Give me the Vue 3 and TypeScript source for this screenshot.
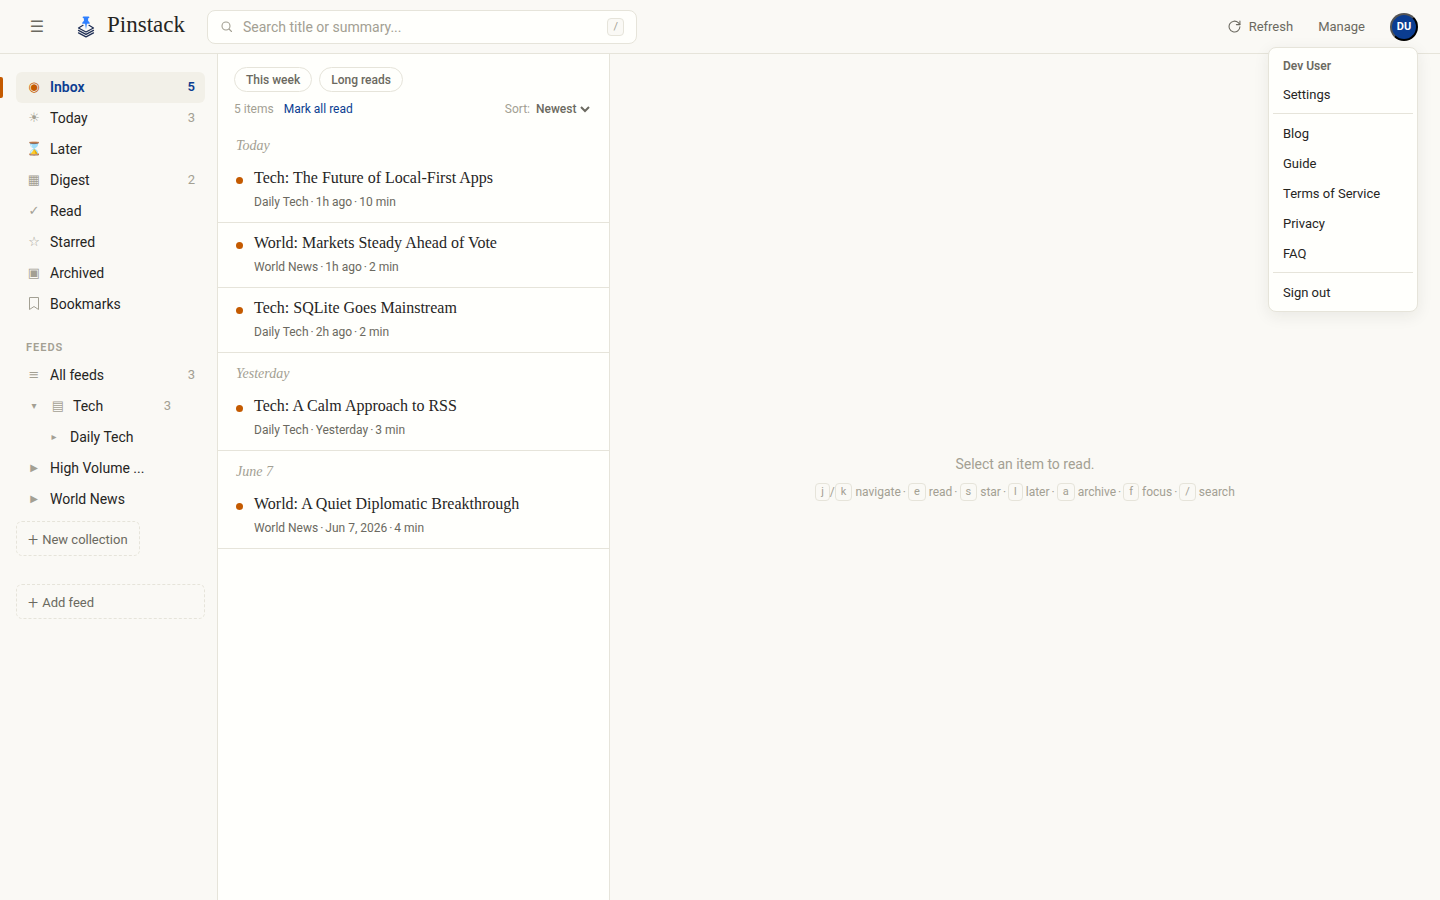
<script setup lang="ts">
import { ref } from 'vue'

interface NavItem {
  label: string
  icon: string
  count?: number
}
interface Article {
  title: string
  meta: string[]
}
interface Group {
  label: string
  items: Article[]
}

const query = ref('')
const sort = ref('Newest')
const active = ref('Inbox')

const views: NavItem[] = [
  { label: 'Inbox', icon: '◉', count: 5 },
  { label: 'Today', icon: '☀', count: 3 },
  { label: 'Later', icon: '⌛' },
  { label: 'Digest', icon: '▦', count: 2 },
  { label: 'Read', icon: '✓' },
  { label: 'Starred', icon: '☆' },
  { label: 'Archived', icon: '▣' },
  { label: 'Bookmarks', icon: 'bookmark' },
]

const groups: Group[] = [
  {
    label: 'Today',
    items: [
      { title: 'Tech: The Future of Local-First Apps', meta: ['Daily Tech', '1h ago', '10 min'] },
      { title: 'World: Markets Steady Ahead of Vote', meta: ['World News', '1h ago', '2 min'] },
      { title: 'Tech: SQLite Goes Mainstream', meta: ['Daily Tech', '2h ago', '2 min'] },
    ],
  },
  {
    label: 'Yesterday',
    items: [{ title: 'Tech: A Calm Approach to RSS', meta: ['Daily Tech', 'Yesterday', '3 min'] }],
  },
  {
    label: 'June 7',
    items: [{ title: 'World: A Quiet Diplomatic Breakthrough', meta: ['World News', 'Jun 7, 2026', '4 min'] }],
  },
]

const shortcuts = [
  { keys: ['j', 'k'], action: 'navigate' },
  { keys: ['e'], action: 'read' },
  { keys: ['s'], action: 'star' },
  { keys: ['l'], action: 'later' },
  { keys: ['a'], action: 'archive' },
  { keys: ['f'], action: 'focus' },
  { keys: ['/'], action: 'search' },
]

const infoLinks = ['Blog', 'Guide', 'Terms of Service', 'Privacy', 'FAQ']
</script>

<template>
  <div class="app">
    <header class="topbar">
      <button class="burger" type="button" aria-label="Toggle sidebar">☰</button>
      <a class="brand" href="#">
        <svg class="logo" viewBox="0 0 20 24" width="20" height="24" aria-hidden="true">
          <g fill="none" stroke="#1f2f55" stroke-width="1.2" stroke-linejoin="round" stroke-linecap="round">
            <path d="M7 10.300 2.500 13 10 17l7.500-4L13 10.300" />
            <path d="M2.500 15.400 10 19.400l7.500-4" />
            <path d="M2.500 17.900 10 21.900l7.500-4" />
          </g>
          <path
            d="M7.500 1.500h5a.8.8 0 0 1 0 1.700h-.4V6c1 .5 1.600 1.400 1.700 2.800h-2.900L10 14.500 9.100 8.800H6.200C6.300 7.400 6.900 6.500 7.900 6V3.200h-.4a.8.8 0 0 1 0-1.700z"
            fill="#2f80ff"
          />
        </svg>
        <span class="brand-name">Pinstack</span>
      </a>
      <label class="search">
        <svg viewBox="0 0 24 24" width="12" height="12" fill="none" stroke="currentColor" stroke-width="2.200" stroke-linecap="round" aria-hidden="true">
          <circle cx="10" cy="10" r="8" />
          <path d="m16.500 16.500 4.500 4.500" />
        </svg>
        <input v-model="query" type="text" placeholder="Search title or summary..." aria-label="Search title or summary" />
        <kbd>/</kbd>
      </label>
      <div class="actions">
        <button class="action" type="button">
          <svg viewBox="0 0 24 24" width="13" height="13" fill="none" stroke="currentColor" stroke-width="2" stroke-linecap="round" stroke-linejoin="round" aria-hidden="true">
            <path d="M22 12.500a10 10 0 1 1-3-7.500L22 8" />
            <path d="M22 2v6.500h-6.500" />
          </svg>
          Refresh
        </button>
        <button class="action" type="button">Manage</button>
        <div class="account">
          <button class="avatar" type="button" aria-label="Account menu">DU</button>
          <div class="menu">
            <div class="menu-user">Dev User</div>
            <a class="menu-item" href="#">Settings</a>
            <hr />
            <a v-for="link in infoLinks" :key="link" class="menu-item" href="#">{{ link }}</a>
            <hr />
            <button class="menu-item" type="button">Sign out</button>
          </div>
        </div>
      </div>
    </header>

    <div class="columns">
      <aside class="sidebar">
        <nav class="views">
          <a
            v-for="view in views"
            :key="view.label"
            class="row"
            :class="{ active: view.label === active }"
            href="#"
            @click.prevent="active = view.label"
          >
            <span class="icon">
              <svg v-if="view.icon === 'bookmark'" viewBox="0 0 12 15" width="12" height="15" fill="none" stroke="currentColor" aria-hidden="true">
                <path d="M1.500 1.500h9v12L6 10.500l-4.500 3z" />
              </svg>
              <template v-else>{{ view.icon }}</template>
            </span>
            <span class="label">{{ view.label }}</span>
            <span v-if="view.count" class="count">{{ view.count }}</span>
          </a>
        </nav>

        <h2 class="section">FEEDS</h2>
        <nav class="feeds">
          <a class="row" href="#">
            <span class="icon">≡</span>
            <span class="label">All feeds</span>
            <span class="count">3</span>
          </a>
          <a class="row folder" href="#">
            <span class="icon caret">▾</span>
            <span class="icon">▤</span>
            <span class="label">Tech</span>
            <span class="count">3</span>
          </a>
          <a class="row child" href="#">
            <span class="icon caret">▸</span>
            <span class="label">Daily Tech</span>
          </a>
          <a class="row" href="#">
            <span class="icon caret">▶</span>
            <span class="label">High Volume ...</span>
          </a>
          <a class="row" href="#">
            <span class="icon caret">▶</span>
            <span class="label">World News</span>
          </a>
        </nav>
        <button class="add collection" type="button"><span class="plus">+</span>New collection</button>
        <button class="add feed" type="button"><span class="plus">+</span>Add feed</button>
      </aside>

      <section class="list">
        <div class="chips">
          <button class="chip" type="button">This week</button>
          <button class="chip" type="button">Long reads</button>
        </div>
        <div class="tools">
          <span>5 items</span>
          <button class="mark" type="button">Mark all read</button>
          <label class="sort">
            Sort:
            <select v-model="sort">
              <option>Newest</option>
              <option>Oldest</option>
            </select>
          </label>
        </div>
        <template v-for="group in groups" :key="group.label">
          <h3 class="group">{{ group.label }}</h3>
          <article v-for="item in group.items" :key="item.title" class="item">
            <span class="dot"></span>
            <div>
              <h4>{{ item.title }}</h4>
              <p class="meta">
                <template v-for="(part, i) in item.meta" :key="part"><span v-if="i">·</span><span>{{ part }}</span></template>
              </p>
            </div>
          </article>
        </template>
      </section>

      <main class="reader">
        <p class="empty">Select an item to read.</p>
        <p class="hints">
          <template v-for="(hint, i) in shortcuts" :key="hint.action">
            <template v-for="(key, k) in hint.keys" :key="key"><span v-if="k">/</span><kbd>{{ key }}</kbd></template>
            <span class="hint">{{ hint.action }}</span>
            <span v-if="i < shortcuts.length - 1" class="sep">·</span>
          </template>
        </p>
      </main>
    </div>
  </div>
</template>

<style>
body {
  margin: 0;
  background: #faf9f5;
}
</style>

<style scoped>
.app {
  --line: #e6e4da;
  --ink: #26251f;
  --soft: #6b6960;
  --faint: #a3a093;
  --blue: #0b3d91;
  --orange: #c45a00;
  --paper: #fffffc;
  display: flex;
  flex-direction: column;
  min-height: 100vh;
  background: #faf9f5;
  color: var(--ink);
  font: 14px/20px Roboto, "Liberation Sans", sans-serif;
}
.app * {
  box-sizing: border-box;
}
button,
input,
select {
  font: inherit;
  color: inherit;
  background: none;
  border: 0;
  padding: 0;
  margin: 0;
}
button {
  cursor: pointer;
}
a {
  color: inherit;
  text-decoration: none;
}
h2,
h3,
h4,
p {
  margin: 0;
}
kbd {
  height: 18px;
  padding: 0 5px;
  border: 1px solid var(--line);
  border-radius: 4px;
  background: #faf9f5;
  color: var(--faint);
  font: 11px/16px Roboto, "Liberation Sans", sans-serif;
}
.topbar {
  display: flex;
  align-items: center;
  height: 54px;
  padding: 0 22px;
  border-bottom: 1px solid var(--line);
}
.burger {
  width: 30px;
  height: 30px;
  color: var(--soft);
  font: 16px/30px "DejaVu Sans", sans-serif;
}
.brand {
  display: flex;
  align-items: center;
  gap: 11px;
  width: 131px;
  margin-left: 24px;
}
.brand-name {
  padding-bottom: 4px;
  font: 500 23px/28px "Liberation Serif", serif;
}
.search {
  display: flex;
  align-items: center;
  width: 430px;
  height: 34px;
  padding: 0 12px 0 13px;
  border: 1px solid var(--line);
  border-radius: 8px;
  background: var(--paper);
  color: var(--faint);
}
.search input {
  flex: 1;
  min-width: 0;
  margin-left: 10px;
  color: var(--ink);
  outline: none;
}
.search input::placeholder {
  color: var(--faint);
}
.actions {
  display: flex;
  align-items: center;
  margin-left: auto;
  color: var(--soft);
  font-size: 13px;
}
.action {
  display: flex;
  align-items: center;
  gap: 8px;
  margin-right: 25px;
}
.account {
  position: relative;
}
.avatar {
  display: block;
  width: 28px;
  height: 28px;
  border: 2px outset #000;
  border-radius: 50%;
  background: var(--blue);
  color: #fff;
  font-size: 11px;
  font-weight: 700;
  line-height: 24px;
}
.menu {
  position: absolute;
  top: 34px;
  right: 0;
  z-index: 5;
  width: 150px;
  padding: 4px;
  border: 1px solid var(--line);
  border-radius: 8px;
  background: var(--paper);
  box-shadow: 0 4px 16px rgba(38, 37, 31, 0.08);
  color: var(--ink);
}
.menu-user {
  padding: 4px 10px 3px;
  color: var(--soft);
  font-size: 12px;
  font-weight: 600;
}
.menu-item {
  display: block;
  width: 100%;
  padding: 6px 10px 4px;
  text-align: left;
}
.menu hr {
  height: 1px;
  margin: 4px 0;
  border: 0;
  background: var(--line);
}
.columns {
  display: flex;
  flex: 1;
}
.sidebar {
  width: 218px;
  padding: 18px 12px 18px 16px;
  border-right: 1px solid var(--line);
}
.row {
  position: relative;
  display: flex;
  align-items: center;
  gap: 8px;
  height: 31px;
  padding: 0 10px 2px;
  border-radius: 6px;
}
.icon {
  display: flex;
  justify-content: center;
  width: 16px;
  color: var(--faint);
  font: 13px/20px Roboto, "DejaVu Sans", sans-serif;
}
.caret {
  font-size: 10px;
}
.label {
  flex: 1;
}
.count {
  color: var(--faint);
  font-size: 13px;
}
.active {
  background: #f2f0e8;
  color: var(--blue);
  font-weight: 600;
}
.active .icon {
  color: var(--orange);
}
.active .count {
  color: var(--blue);
}
.active::before {
  content: "";
  position: absolute;
  top: 5px;
  left: -16px;
  width: 3px;
  height: 21px;
  border-radius: 0 2px 2px 0;
  background: var(--orange);
}
.section {
  margin: 18px 0 2px;
  padding: 0 10px;
  color: var(--faint);
  font-size: 11px;
  font-weight: 600;
  letter-spacing: 1px;
}
.folder {
  padding-right: 34px;
}
.folder .label {
  margin-left: -1px;
}
.child {
  padding-left: 30px;
}
.add {
  display: flex;
  align-items: center;
  gap: 4px;
  height: 35px;
  padding: 2px 11px 0;
  border: 1px dashed var(--line);
  border-radius: 6px;
  color: var(--soft);
  font-size: 13px;
}
.plus {
  font: 300 18px/18px Roboto, sans-serif;
}
.collection {
  margin-top: 6px;
}
.feed {
  width: 100%;
  margin-top: 28px;
}
.list {
  width: 392px;
  border-right: 1px solid var(--line);
  background: var(--paper);
}
.chips {
  display: flex;
  gap: 7px;
  padding: 13px 16px 7px;
}
.chip {
  height: 25px;
  padding: 0 11px;
  border: 1px solid var(--line);
  border-radius: 13px;
  color: var(--soft);
  font-size: 12px;
  font-weight: 500;
}
.tools {
  display: flex;
  gap: 10px;
  padding: 0 16px 6px;
  color: var(--faint);
  font-size: 12px;
}
.mark {
  color: var(--blue);
}
.sort {
  display: flex;
  gap: 2px;
  margin-left: auto;
}
.sort select {
  color: var(--soft);
  font-weight: 500;
}
.group {
  padding: 13px 18px 4px;
  color: var(--faint);
  font: italic 14px/16px "Liberation Serif", serif;
}
.item {
  display: flex;
  gap: 11px;
  padding: 9px 18px 10px;
  border-bottom: 1px solid var(--line);
}
.dot {
  flex: none;
  width: 7px;
  height: 7px;
  margin-top: 10px;
  border-radius: 50%;
  background: var(--orange);
}
.item h4 {
  font: 500 16px/22px "Liberation Serif", serif;
}
.meta {
  display: flex;
  gap: 2px;
  margin-top: 3px;
  color: var(--soft);
  font-size: 12px;
}
.reader {
  display: flex;
  flex: 1;
  flex-direction: column;
  align-items: center;
  justify-content: center;
  gap: 8px;
  padding-top: 2px;
  color: var(--faint);
}
.hints {
  display: flex;
  align-items: center;
  font-size: 12px;
}
.hint {
  margin-left: 3px;
}
.sep {
  margin: 0 2px;
}
</style>
